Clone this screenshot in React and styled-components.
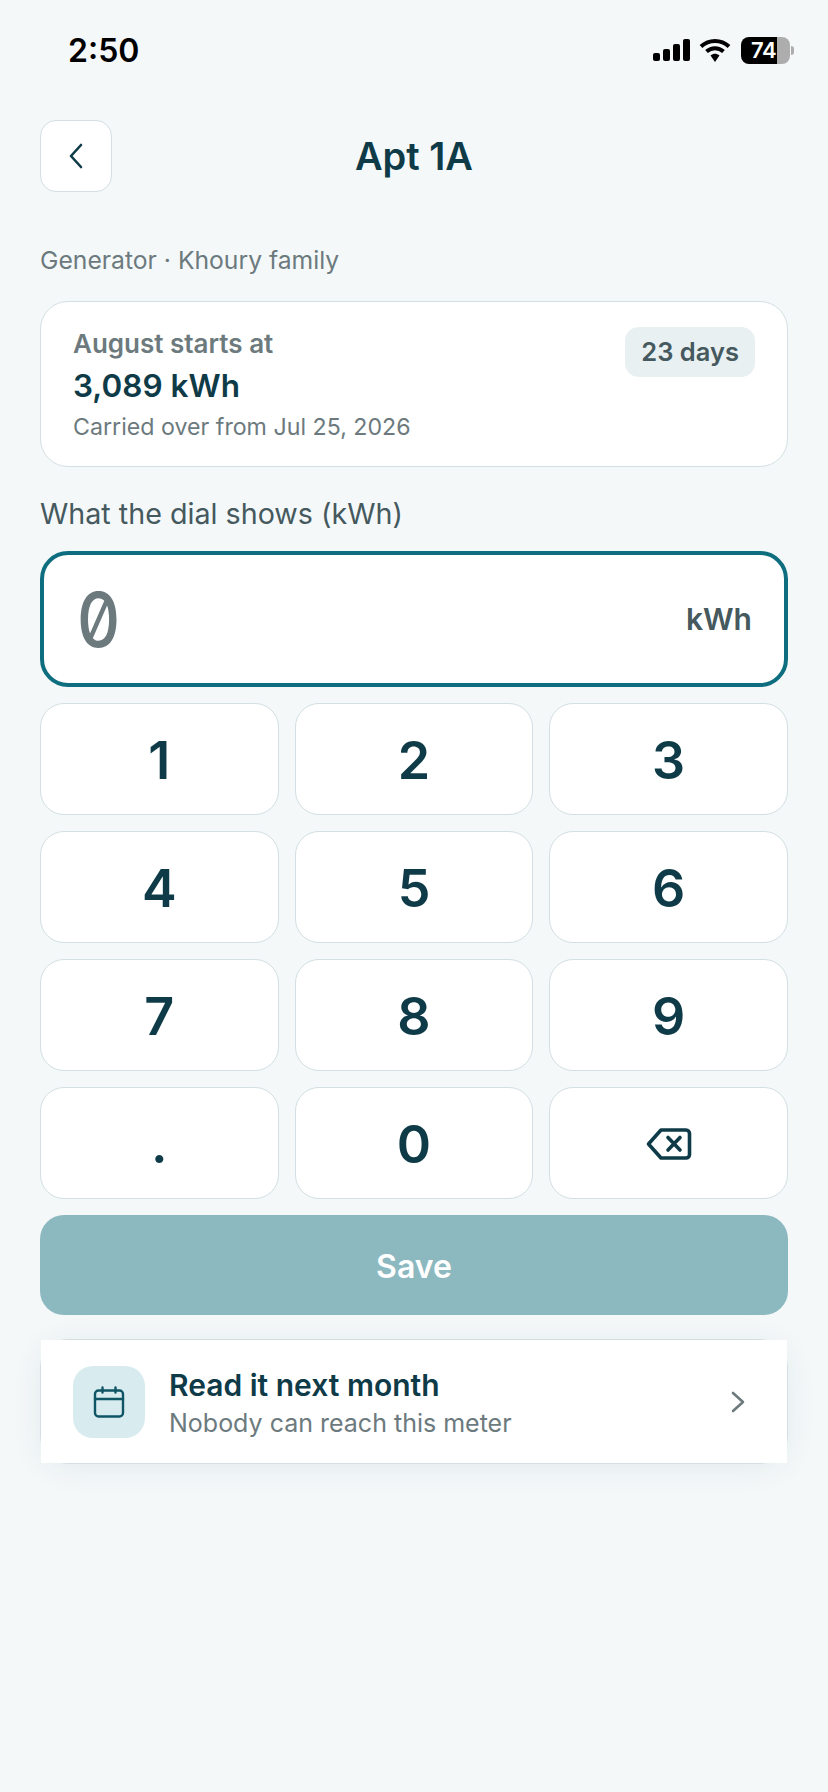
import styled, { createGlobalStyle } from 'styled-components';

const GlobalStyle = createGlobalStyle`
  * { box-sizing: border-box; }
  html, body { margin: 0; padding: 0; background: #f4f8f9; }
  body { font-family: Inter, "Liberation Sans", sans-serif; color: #0e3b47; }
`;

const keys = ['1', '2', '3', '4', '5', '6', '7', '8', '9', '.', '0'];

function StatusIcons() {
  return (
    <StatusRight>
      <svg width="37" height="24" viewBox="0 0 37 24">
        <rect x="0" y="15" width="7" height="8" rx="2" fill="#000" />
        <rect x="10" y="11" width="7" height="12" rx="2" fill="#000" />
        <rect x="20" y="6" width="7" height="17" rx="2" fill="#000" />
        <rect x="30" y="1" width="7" height="22" rx="2" fill="#000" />
      </svg>
      <svg width="32" height="24" viewBox="0 0 32 24">
        <path d="M2 8.5 C10 1 22 1 30 8.5" fill="none" stroke="#000" strokeWidth="4" />
        <path d="M7.5 13.5 C12.5 9 19.5 9 24.5 13.5" fill="none" stroke="#000" strokeWidth="4" />
        <path d="M11.5 17.5 C14.5 15 17.5 15 20.5 17.5 L16 24 Z" fill="#000" />
      </svg>
      <Battery>
        <BatteryFill>74</BatteryFill>
        <BatteryRest />
        <BatteryTip />
      </Battery>
    </StatusRight>
  );
}

export default function App() {
  return (
    <Page>
      <GlobalStyle />
      <StatusBar>
        <Time>2:50</Time>
        <StatusIcons />
      </StatusBar>

      <Header>
        <BackButton>
          <svg width="20" height="28" viewBox="0 0 20 28" fill="none">
            <path d="M15 3 L5 14 L15 25" stroke="#0e3b47" strokeWidth="2.6" strokeLinecap="round" strokeLinejoin="round" />
          </svg>
        </BackButton>
        <Title>Apt 1A</Title>
      </Header>

      <Subtitle>Generator · Khoury family</Subtitle>

      <InfoCard>
        <div>
          <InfoLabel>August starts at</InfoLabel>
          <InfoValue>3,089 kWh</InfoValue>
          <InfoNote>Carried over from Jul 25, 2026</InfoNote>
        </div>
        <DaysBadge>23 days</DaysBadge>
      </InfoCard>

      <FieldLabel>What the dial shows (kWh)</FieldLabel>
      <InputBox>
        <InputValue>0</InputValue>
        <InputUnit>kWh</InputUnit>
      </InputBox>

      <Keypad>
        {keys.map(k => (
          <Key key={k}>{k}</Key>
        ))}
        <Key aria-label="Delete">
          <svg width="46" height="34" viewBox="0 0 46 34" fill="none">
            <path
              d="M15 3 H40 a3.5 3.5 0 0 1 3.5 3.5 V27.5 a3.5 3.5 0 0 1 -3.5 3.5 H15 L2.5 17 Z"
              stroke="#0e3b47"
              strokeWidth="3.6"
              strokeLinejoin="round"
            />
            <path d="M22 10.5 L34 23 M34 10.5 L22 23" stroke="#0e3b47" strokeWidth="3.6" strokeLinecap="round" />
          </svg>
        </Key>
      </Keypad>

      <SaveButton>Save</SaveButton>

      <NextMonthFrame>
        <NextMonthRow>
          <IconTile>
            <svg width="32" height="32" viewBox="0 0 32 32" fill="none">
              <rect x="2" y="4.5" width="28" height="26" rx="3.5" stroke="#0f5565" strokeWidth="2.4" />
              <path d="M2 13 H30 M9.5 1.5 V6.5 M22.5 1.5 V6.5" stroke="#0f5565" strokeWidth="2.4" strokeLinecap="round" />
            </svg>
          </IconTile>
          <RowText>
            <RowTitle>Read it next month</RowTitle>
            <RowNote>Nobody can reach this meter</RowNote>
          </RowText>
          <RowChevron width="14" height="22" viewBox="0 0 14 22" fill="none">
            <path d="M2 2 L12 11 L2 20" stroke="#6c7a7e" strokeWidth="2.6" strokeLinecap="round" strokeLinejoin="round" />
          </RowChevron>
        </NextMonthRow>
      </NextMonthFrame>
    </Page>
  );
}

const Page = styled.div`
  width: 828px;
  min-height: 1792px;
  padding: 0 40px;
  background: #f4f8f9;
`;

const StatusBar = styled.div`
  height: 100px;
  margin: 0 -6px 0 28px;
  display: flex;
  align-items: center;
  justify-content: space-between;
`;

const Time = styled.div`
  font-size: 32px;
  font-weight: 600;
  color: #000;
`;

const StatusRight = styled.div`
  display: flex;
  align-items: center;
  gap: 9px;
`;

const Battery = styled.div`
  display: flex;
  align-items: center;
  height: 27px;
  margin-left: 1px;
`;

const BatteryFill = styled.div`
  width: 36px;
  height: 27px;
  padding-left: 10px;
  overflow: hidden;
  background: #000;
  color: #fff;
  border-radius: 8px 0 0 8px;
  font-size: 22px;
  font-weight: 600;
  letter-spacing: -0.5px;
  line-height: 27px;
  white-space: nowrap;
`;

const BatteryRest = styled.div`
  width: 13px;
  height: 27px;
  background: #adadad;
  border-radius: 0 8px 8px 0;
`;

const BatteryTip = styled.div`
  width: 3px;
  height: 9px;
  margin-left: 1px;
  background: #adadad;
  border-radius: 0 3px 3px 0;
`;

const Header = styled.div`
  height: 72px;
  margin-top: 20px;
  position: relative;
  display: flex;
  align-items: center;
  justify-content: center;
`;

const BackButton = styled.button`
  position: absolute;
  left: 0;
  top: 0;
  width: 72px;
  height: 72px;
  padding: 0;
  display: flex;
  align-items: center;
  justify-content: center;
  background: #fff;
  border: 1.5px solid #d3dfe3;
  border-radius: 16px;
`;

const Title = styled.h1`
  margin: 0;
  font-size: 38px;
  font-weight: 600;
  color: #0e3b47;
`;

const Subtitle = styled.div`
  margin-top: 52px;
  font-size: 24.7px;
  line-height: 32px;
  color: #6c7a7e;
`;

const InfoCard = styled.div`
  margin-top: 25px;
  height: 166px;
  padding: 26px 32px 25px;
  display: flex;
  justify-content: space-between;
  align-items: flex-start;
  background: #fff;
  border: 1.5px solid #d3dfe3;
  border-radius: 28px;
`;

const InfoLabel = styled.div`
  font-size: 26px;
  line-height: 32px;
  font-weight: 600;
  color: #6c7a7e;
`;

const InfoValue = styled.div`
  margin-top: 6px;
  font-size: 31.5px;
  line-height: 40px;
  font-weight: 600;
  color: #0e3b47;
`;

const InfoNote = styled.div`
  margin-top: 5px;
  font-size: 23.2px;
  line-height: 32px;
  color: #6c7a7e;
`;

const DaysBadge = styled.div`
  margin-top: -1px;
  padding: 8px 16px;
  height: 50px;
  font-size: 25.5px;
  line-height: 34px;
  font-weight: 600;
  color: #45595e;
  background: #e9f0f2;
  border-radius: 14px;
`;

const FieldLabel = styled.div`
  margin-top: 29px;
  font-size: 28.7px;
  line-height: 36px;
  color: #45595e;
`;

const InputBox = styled.div`
  margin-top: 19px;
  height: 136px;
  padding: 0 32px;
  display: flex;
  align-items: center;
  justify-content: space-between;
  background: #fff;
  border: 4px solid #0e6e7f;
  border-radius: 28px;
`;

const InputValue = styled.div`
  font-size: 76px;
  font-weight: 500;
  font-feature-settings: "zero" 1;
  color: #6c7a7e;
  width: 44px;
  transform: translateX(1px) scaleX(0.88);
  transform-origin: left center;
`;

const InputUnit = styled.div`
  font-size: 30px;
  font-weight: 600;
  color: #45595e;
`;

const Keypad = styled.div`
  margin-top: 16px;
  display: grid;
  grid-template-columns: repeat(3, 1fr);
  gap: 16px;
`;

const Key = styled.button`
  height: 112px;
  padding: 2px 0 0;
  display: flex;
  align-items: center;
  justify-content: center;
  background: #fff;
  border: 1.5px solid #d3dfe3;
  border-radius: 24px;
  font-family: inherit;
  font-size: 52px;
  font-weight: 600;
  color: #0e3b47;
`;

const SaveButton = styled.button`
  width: 100%;
  height: 100px;
  margin-top: 16px;
  padding: 2px 0 0;
  background: #8cb9c0;
  border: none;
  border-radius: 24px;
  font-family: inherit;
  font-size: 32px;
  font-weight: 600;
  color: #fff;
`;

const NextMonthFrame = styled.div`
  margin-top: 24px;
  height: 125px;
  border: 1.5px solid #d3dfe3;
  border-radius: 28px;
  box-shadow: 0 4px 32px rgba(14, 59, 71, 0.07);
`;

const NextMonthRow = styled.div`
  height: 100%;
  padding: 0 32px;
  display: flex;
  align-items: center;
  gap: 24px;
  background: #fff;
`;

const IconTile = styled.div`
  width: 72px;
  height: 72px;
  flex: none;
  display: flex;
  align-items: center;
  justify-content: center;
  background: #d8ebef;
  border-radius: 20px;
`;

const RowText = styled.div`
  flex: 1;
  padding-top: 2px;
`;

const RowTitle = styled.div`
  font-size: 30px;
  line-height: 38px;
  font-weight: 600;
  color: #0e3b47;
`;

const RowNote = styled.div`
  margin-top: 2px;
  font-size: 25px;
  line-height: 34px;
  color: #6c7a7e;
`;

const RowChevron = styled.svg`
  margin-right: 10px;
  flex: none;
`;
